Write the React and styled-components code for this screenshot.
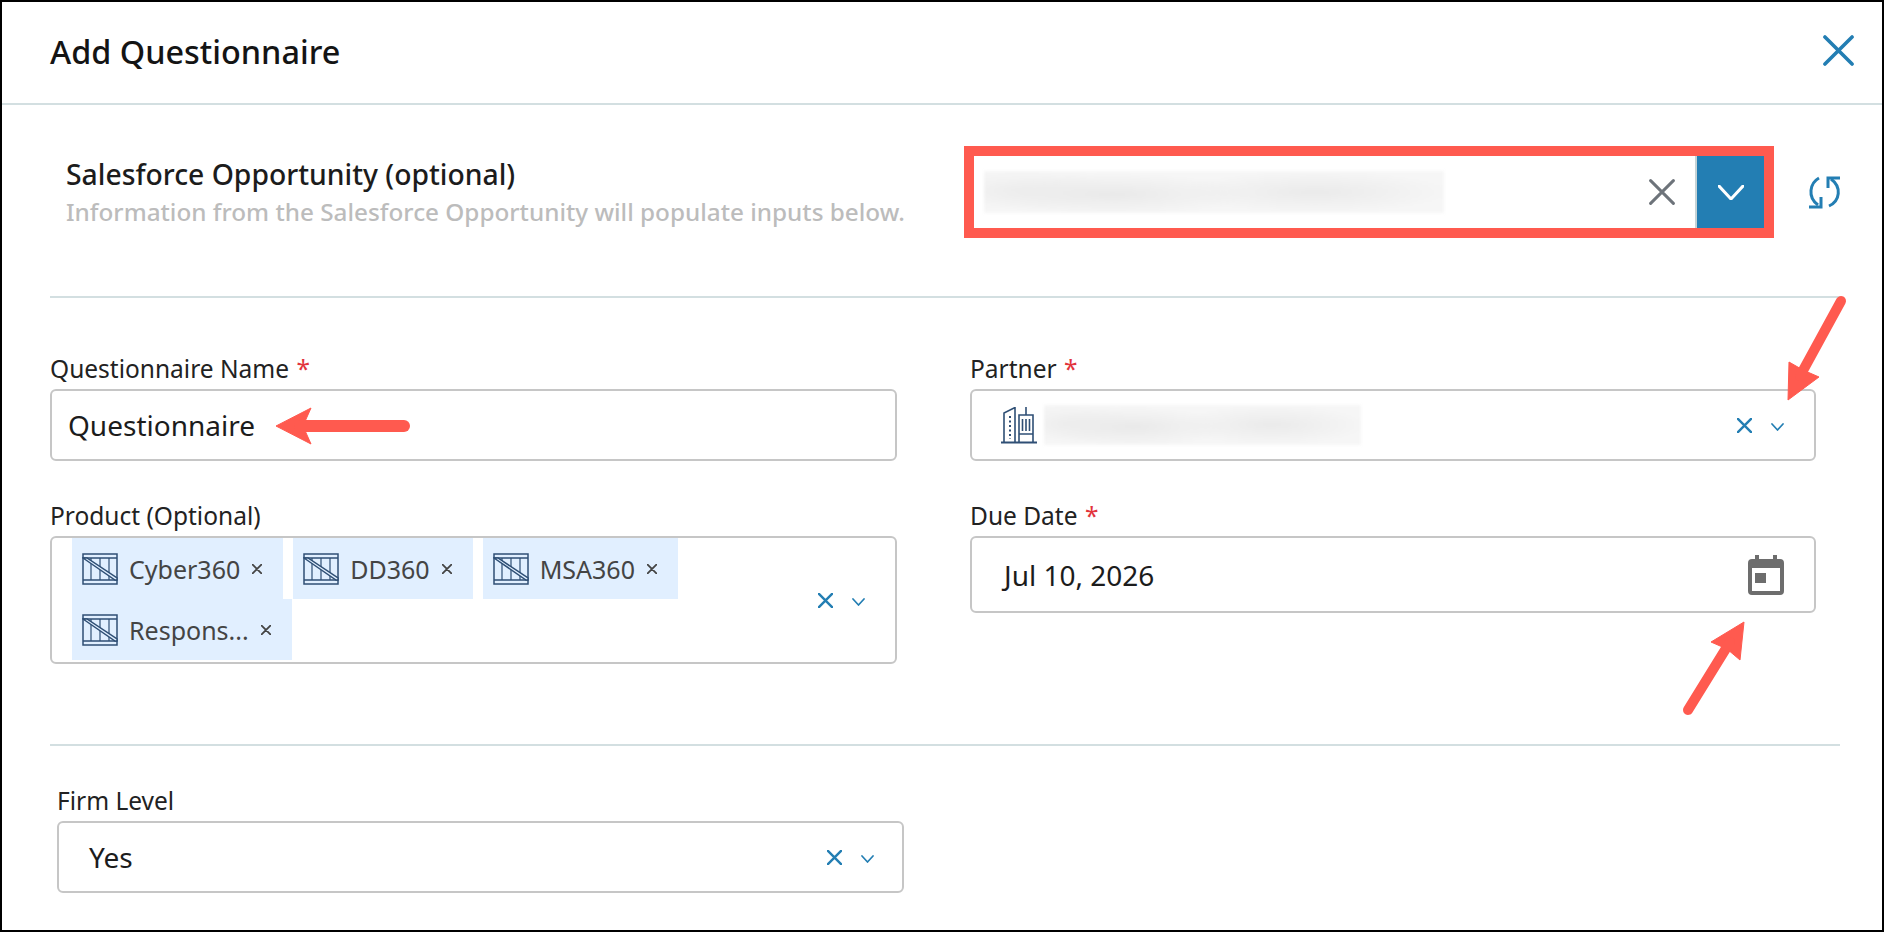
import styled, { createGlobalStyle } from "styled-components";

const GlobalStyle = createGlobalStyle`
  html, body { margin: 0; padding: 0; background: #fff; }
  body { font-family: "Noto Sans", "Open Sans", sans-serif; color: #1c1c1c; }
`;

const blue = "#237eb3";

const Page = styled.div`
  position: relative;
  width: 1884px;
  height: 932px;
  overflow: hidden;
`;
const Frame = styled.div`
  box-sizing: border-box;
  width: 1884px;
  height: 932px;
  border: 2px solid #000;
  display: flex;
  flex-direction: column;
`;
const Header = styled.header`
  box-sizing: border-box;
  flex: none;
  height: 103px;
  padding: 0 28px 4px 48px;
  border-bottom: 2px solid #d3dfe1;
  display: flex;
  align-items: center;
  justify-content: space-between;
`;
const Title = styled.h1`
  margin: 0;
  font-size: 32.400px;
  font-weight: 500;
  color: #141414;
`;
const Opportunity = styled.section`
  box-sizing: border-box;
  flex: none;
  height: 193px;
  margin: 0 42px 0 48px;
  padding: 41px 0 0 16px;
  border-bottom: 2px solid #d3dfe1;
  display: grid;
  grid-template-columns: 898px 810px 1fr;
  align-items: start;
`;
const OpportunityText = styled.div`
  padding-top: 9px;
`;
const OpportunityLabel = styled.div`
  font-size: 28.300px;
  line-height: 38px;
  font-weight: 500;
  color: #1c1c1c;
`;
const OpportunityHint = styled.div`
  font-size: 24.300px;
  line-height: 38px;
  font-weight: 500;
  color: #bcbcbc;
  white-space: nowrap;
`;
const HighlightBox = styled.div`
  box-sizing: border-box;
  height: 92px;
  border: 10px solid #ff5a4f;
  display: flex;
  align-items: center;
  padding-left: 10px;
`;
const ClearSlot = styled.div`
  margin-left: auto;
  width: 70px;
  display: flex;
  justify-content: center;
  padding-left: 4px;
  box-sizing: border-box;
`;
const DropButton = styled.div`
  flex: none;
  width: 67px;
  height: 72px;
  background: ${blue};
  border-left: 2px solid #c5d3d6;
  display: flex;
  align-items: center;
  justify-content: center;
`;
const RefreshSlot = styled.div`
  height: 92px;
  display: flex;
  align-items: center;
  padding-left: 34px;
`;
const FormGrid = styled.section`
  box-sizing: border-box;
  flex: none;
  height: 448px;
  margin: 0 42px 0 48px;
  padding: 57px 24px 0 0;
  border-bottom: 2px solid #d3dfe1;
  display: grid;
  grid-template-columns: 847px 846px;
  column-gap: 73px;
  row-gap: 41px;
  align-content: start;
  align-items: start;
`;
const Field = styled.div`
  display: flex;
  flex-direction: column;
`;
const FieldLabel = styled.label`
  height: 30px;
  margin-bottom: 4px;
  font-size: 24.500px;
  line-height: 28px;
  color: #222;
  white-space: nowrap;
`;
const Star = styled.span`
  color: #e2343c;
  margin-left: 1px;
`;
const Control = styled.div`
  box-sizing: border-box;
  height: ${(p) => p.$height}px;
  border: 2px solid #c6c6c6;
  border-radius: 6px;
  background: #fff;
  display: flex;
  align-items: center;
  padding-left: ${(p) => p.$pad}px;
  padding-right: ${(p) => p.$padRight || 0}px;
  font-size: 28px;
  color: #1c1c1c;
`;
const ChipList = styled.div`
  flex: 1;
  align-self: stretch;
  display: flex;
  flex-wrap: wrap;
  align-content: flex-start;
  column-gap: 10px;
  max-width: 640px;
`;
const Chip = styled.span`
  box-sizing: border-box;
  height: 61px;
  padding: 0 21px 0 10px;
  background: #e1efff;
  display: flex;
  align-items: center;
  font-size: 25px;
  color: #444;
`;
const ChipText = styled.span`
  margin: 0 12px 0 11px;
`;
const Actions = styled.div`
  margin-left: auto;
  flex: none;
  display: flex;
  align-items: center;
  gap: 19px;
`;
const ChevronSlot = styled.span`
  display: flex;
  margin-top: 3px;
`;
const PartnerValue = styled.div`
  display: flex;
  align-items: center;
  gap: 7px;
`;
const Blurred = styled.div`
  width: ${(p) => p.$width}px;
  height: ${(p) => p.$height}px;
  filter: blur(1.500px);
  background:
    radial-gradient(ellipse 30% 50% at 28% 55%, #e9e9e9 0%, transparent 100%),
    radial-gradient(ellipse 30% 50% at 72% 50%, #eaeaea 0%, transparent 100%),
    radial-gradient(ellipse 20% 50% at 8% 45%, #eeeeee 0%, transparent 100%),
    #f6f6f6;
`;
const FirmSection = styled.section`
  box-sizing: border-box;
  flex: 1;
  padding: 41px 0 0 55px;
  width: 902px;
`;
const Overlay = styled.svg`
  position: absolute;
  top: 0;
  left: 0;
  pointer-events: none;
`;

const CloseIcon = ({ size, color, width = 2 }) => (
  <svg width={size} height={size} viewBox="0 0 32 32" fill="none" stroke={color} strokeWidth={(width * 32) / size} strokeLinecap="round">
    <path d="M2 2 30 30M30 2 2 30" />
  </svg>
);

const Chevron = ({ w, h, color, width = 2 }) => (
  <svg width={w} height={h} viewBox={`0 0 ${w} ${h}`} fill="none" stroke={color} strokeWidth={width} strokeLinecap="round" strokeLinejoin="round">
    <path d={`M1 1 ${w / 2} ${h - 1} ${w - 1} 1`} />
  </svg>
);

const RefreshIcon = () => (
  <svg width="34" height="34" viewBox="0 0 34 34" fill="none" stroke={blue} strokeWidth="3">
    <path d="M11 3C2 8 -1 22 10 30" />
    <path d="M1 32H13V22" />
    <path d="M21 31C32 26 34 12 23 4" />
    <path d="M32 3H20V13" />
  </svg>
);

const CrateIcon = () => (
  <svg width="36" height="32" viewBox="0 0 36 32" fill="none" stroke="#2f4f75" strokeWidth="1.500" style={{ flex: "none" }}>
    <rect x="1" y="1" width="34" height="30" />
    <path d="M1 5H35M1 27H35" />
    <path d="M9 5V27M18 5V27M27 5V27" strokeWidth="1.200" />
    <path d="M1 5 33 27H35V25L5 5Z" fill="#e1efff" />
  </svg>
);

const BuildingIcon = () => (
  <svg width="36" height="37" viewBox="0 0 36 37" fill="none" stroke="#2f4f75" strokeWidth="1.600" style={{ flex: "none" }}>
    <path d="M0 35.500H36" strokeWidth="2" />
    <path d="M3 35V6L14 0.500V35" />
    <path d="M9 9V32" strokeDasharray="2 2.500" strokeWidth="2" />
    <path d="M18 35V8H32V35M18 27H32" />
    <path d="M25 8V0" />
    <path d="M21.500 12V24M25 12V24M28.500 12V24" strokeWidth="1.600" />
  </svg>
);

const CalendarIcon = () => (
  <svg width="36" height="40" viewBox="0 0 36 40" style={{ flex: "none" }}>
    <path fill="#6d6d6d" d="M7 0H11V4H25V0H29V4H32A4 4 0 0 1 36 8V36A4 4 0 0 1 32 40H4A4 4 0 0 1 0 36V8A4 4 0 0 1 4 4H7Z" />
    <rect x="4" y="13" width="28" height="23" fill="#fff" />
    <rect x="7" y="18" width="11" height="10" fill="#6d6d6d" />
  </svg>
);

const SelectActions = () => (
  <Actions>
    <CloseIcon size={15} color={blue} width={2.400} />
    <ChevronSlot>
      <Chevron w={13} h={8} color={blue} width={1.700} />
    </ChevronSlot>
  </Actions>
);

const products = ["Cyber360", "DD360", "MSA360", "Respons..."];

export default function App() {
  return (
    <Page>
      <GlobalStyle />
      <Frame>
        <Header>
          <Title>Add Questionnaire</Title>
          <CloseIcon size={31} color={blue} width={3.600} />
        </Header>

        <Opportunity>
          <OpportunityText>
            <OpportunityLabel>Salesforce Opportunity (optional)</OpportunityLabel>
            <OpportunityHint>Information from the Salesforce Opportunity will populate inputs below.</OpportunityHint>
          </OpportunityText>
          <HighlightBox>
            <Blurred $width={460} $height={42} />
            <ClearSlot>
              <CloseIcon size={26} color="#6d737a" width={3} />
            </ClearSlot>
            <DropButton>
              <Chevron w={26} h={15} color="#fff" width={3} />
            </DropButton>
          </HighlightBox>
          <RefreshSlot>
            <RefreshIcon />
          </RefreshSlot>
        </Opportunity>

        <FormGrid>
          <Field>
            <FieldLabel>Questionnaire Name <Star>*</Star></FieldLabel>
            <Control $height={72} $pad={16}>Questionnaire</Control>
          </Field>
          <Field>
            <FieldLabel>Partner <Star>*</Star></FieldLabel>
            <Control $height={72} $pad={29} $padRight={30}>
              <PartnerValue>
                <BuildingIcon />
                <Blurred $width={317} $height={40} />
              </PartnerValue>
              <SelectActions />
            </Control>
          </Field>
          <Field>
            <FieldLabel>Product (Optional)</FieldLabel>
            <Control $height={128} $pad={20} $padRight={30}>
              <ChipList>
                {products.map((name) => (
                  <Chip key={name}>
                    <CrateIcon />
                    <ChipText>{name}</ChipText>
                    <CloseIcon size={10} color="#444" width={1.800} />
                  </Chip>
                ))}
              </ChipList>
              <SelectActions />
            </Control>
          </Field>
          <Field>
            <FieldLabel>Due Date <Star>*</Star></FieldLabel>
            <Control $height={77} $pad={32} $padRight={30}>
              Jul 10, 2026
              <Actions>
                <CalendarIcon />
              </Actions>
            </Control>
          </Field>
        </FormGrid>

        <FirmSection>
          <Field>
            <FieldLabel>Firm Level</FieldLabel>
            <Control $height={72} $pad={30} $padRight={28}>
              Yes
              <SelectActions />
            </Control>
          </Field>
        </FirmSection>
      </Frame>

      <Overlay width="1884" height="932" viewBox="0 0 1884 932">
        <g fill="#ff5a4f" stroke="#ff5a4f" strokeLinejoin="round">
          <path d="M276 426 311 408 303 426 311 444Z" strokeWidth="1" />
          <path d="M300 426H404" strokeWidth="12" strokeLinecap="round" />
          <path d="M1788 400 1789 362 1803 370 1819 377Z" strokeWidth="1" />
          <path d="M1841 301 1800 376" strokeWidth="10" strokeLinecap="round" />
          <path d="M1744 622 1711 642 1727 649 1740 660Z" strokeWidth="1" />
          <path d="M1688 710 1730 642" strokeWidth="10" strokeLinecap="round" />
        </g>
      </Overlay>
    </Page>
  );
}
